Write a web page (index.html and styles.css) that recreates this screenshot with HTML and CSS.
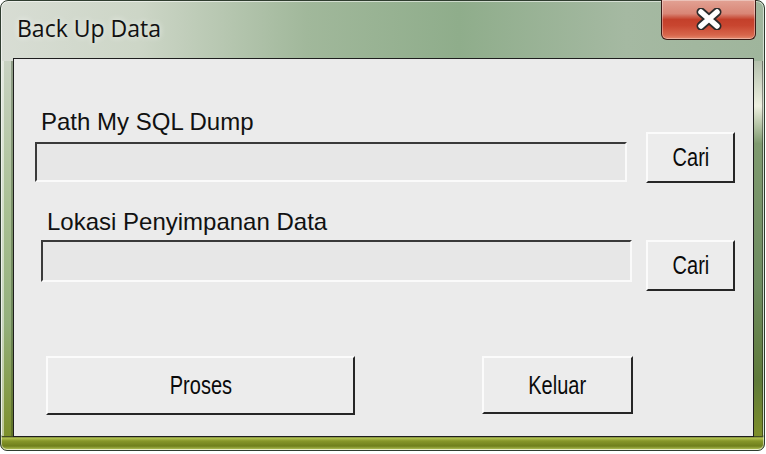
FILE: index.html
```html
<!DOCTYPE html>
<html>
<head>
<meta charset="utf-8">
<link rel="stylesheet" href="styles.css">
</head>
<body>
<div class="window">
  <div class="titlebar">
    <span class="title">Back Up Data</span>
    <button class="close" aria-label="Close">
      <svg width="28" height="22" viewBox="0 0 28 22">
        <path d="M6 4 L22 18 M22 4 L6 18" stroke="#2b2b2b" stroke-width="9" stroke-linecap="round" fill="none"/>
        <path d="M6 4 L22 18 M22 4 L6 18" stroke="#ffffff" stroke-width="5.5" stroke-linecap="round" fill="none"/>
      </svg>
    </button>
  </div>
  <div class="client">
    <div class="label label-1">Path My SQL Dump</div>
    <div class="row row-1">
      <div class="field field-1"></div>
      <button class="btn btn-cari btn-cari-1"><span>Cari</span></button>
    </div>
    <div class="label label-2">Lokasi Penyimpanan Data</div>
    <div class="row row-2">
      <div class="field field-2"></div>
      <button class="btn btn-cari btn-cari-2"><span>Cari</span></button>
    </div>
    <div class="row row-3">
      <button class="btn btn-proses"><span>Proses</span></button>
      <button class="btn btn-keluar"><span>Keluar</span></button>
    </div>
  </div>
</div>
</body>
</html>
```
FILE: styles.css
```css
html, body {
  margin: 0;
  padding: 0;
  background: #ffffff;
  width: 766px;
  height: 454px;
  overflow: hidden;
}

.window {
  box-sizing: border-box;
  width: 765px;
  height: 451px;
  border: 1px solid #2f3d2f;
  border-radius: 8px 8px 7px 7px;
  box-shadow: inset 0 0 0 1px rgba(255,255,255,0.55);
  background:
    linear-gradient(to bottom, rgba(0,0,0,0) 0, rgba(0,0,0,0) 434px, #1c2410 435px, #b4c452 437px, #86962a 440px, #6f7f1c 445px, #a9b950 448px, #e8f0b0 449px),
    linear-gradient(to right, #d8ddd4 0%, #cdd6c7 18%, #a1b89b 40%, #8fad8b 60%, #a5b9a2 82%, #9fb59c 100%);
  display: flex;
  flex-direction: column;
  padding: 0 10px 13px 12px;
  font-family: "Liberation Sans", Arial, sans-serif;
  position: relative;
}

.window::before {
  content: "";
  position: absolute;
  left: 1px;
  top: 60px;
  bottom: 14px;
  width: 11px;
  background: linear-gradient(to bottom, #c8d2c2 0%, #a9c093 40%, #94b07c 70%, #7d902c 100%);
  box-shadow: inset 2px 0 0 rgba(255,255,255,0.5), inset -2px 0 0 rgba(40,60,30,0.35);
}

.window::after {
  content: "";
  position: absolute;
  right: 1px;
  top: 60px;
  bottom: 14px;
  width: 9px;
  background: linear-gradient(to bottom, #b4c0ad 0%, #eef0e0 12%, #7f9a6f 22%, #6e8c60 60%, #5f7a3a 85%, #7d8e2a 100%);
  box-shadow: inset -1px 0 0 rgba(0,0,0,0.4);
}

.titlebar {
  height: 57px;
  display: flex;
  align-items: flex-start;
  justify-content: space-between;
  flex: none;
}

.title {
  font-family: "Open Sans", "Noto Sans", sans-serif;
  font-size: 23px;
  color: #111111;
  margin-left: 4px;
  margin-top: 13px;
  line-height: 28px;
  text-shadow: 0 0 6px rgba(255,255,255,0.8);
}

.close {
  width: 95px;
  height: 40px;
  margin-top: -1px;
  margin-right: -2px;
  padding: 0;
  border: 1px solid #3b1b16;
  border-top: none;
  border-radius: 0 0 6px 6px;
  background: linear-gradient(to bottom, #e2a294 0%, #d98676 35%, #c4402b 50%, #c8452f 65%, #d8664c 90%, #e58a6e 100%);
  box-shadow: inset 0 0 0 1px rgba(255,255,255,0.35);
  display: flex;
  align-items: center;
  justify-content: center;
}

.close svg {
  display: block;
  margin-top: -2px;
}

.client {
  flex: 1;
  position: relative;
  z-index: 1;
  border: 1px solid #1e1e1e;
  background: #ebebeb;
  display: flex;
  flex-direction: column;
  align-items: flex-start;
}

.label {
  font-size: 24px;
  line-height: 20px;
  color: #111111;
  white-space: nowrap;
}

.label-1 {
  margin-top: 53px;
  margin-left: 27px;
}

.label-2 {
  margin-top: 29px;
  margin-left: 33px;
}

.row {
  display: flex;
  align-items: flex-start;
}

.field {
  box-sizing: border-box;
  background: #e7e7e7;
  border-top: 2px solid #3a3a3a;
  border-left: 2px solid #3a3a3a;
  border-right: 2px solid #fafafa;
  border-bottom: 2px solid #fafafa;
}

.field-1 {
  width: 592px;
  height: 40px;
  margin-top: 10px;
  margin-left: 21px;
}

.row-2 {
  margin-top: 8px;
}

.field-2 {
  width: 591px;
  height: 42px;
  margin-left: 27px;
}

.btn {
  box-sizing: border-box;
  padding: 0;
  background: #ececec;
  border-top: 2px solid #fbfbfb;
  border-left: 2px solid #fbfbfb;
  border-right: 2px solid #262626;
  border-bottom: 2px solid #262626;
  display: flex;
  align-items: center;
  justify-content: center;
  font-family: "Liberation Sans", Arial, sans-serif;
  font-size: 25px;
  color: #0a0a0a;
}

.btn span {
  display: inline-block;
  transform: scaleX(0.8);
}

.btn-cari {
  width: 89px;
  height: 51px;
}

.btn-cari-1 {
  margin-left: 19px;
}

.btn-cari-2 {
  margin-left: 14px;
}

.row-3 {
  margin-top: 65px;
}

.btn-proses {
  width: 309px;
  height: 59px;
  margin-left: 32px;
}

.btn-keluar {
  width: 151px;
  height: 58px;
  margin-left: 127px;
}
```
